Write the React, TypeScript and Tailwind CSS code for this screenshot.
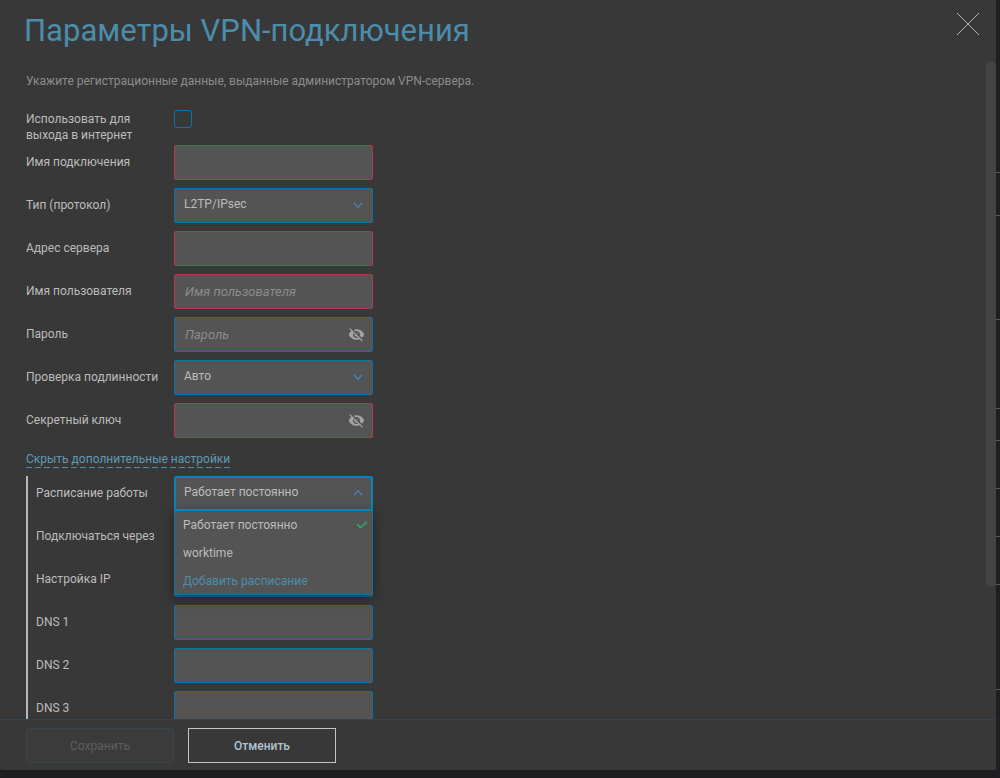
import * as React from "react";
import { clsx } from "clsx";

// ─── Data ─────────────────────────────────────────────────────────────────────

const SCHEDULES = ["Работает постоянно", "worktime"];

// ─── Icons ────────────────────────────────────────────────────────────────────

function Chevron({ up = false }: { up?: boolean }) {
  return (
    <svg
      viewBox="0 0 10 6"
      className={clsx("pointer-events-none absolute right-2.5 top-3.5 h-1.5 w-2.5", up && "rotate-180")}
      fill="none"
      stroke="#4583b8"
      strokeWidth="1.3"
      aria-hidden="true"
    >
      <path d="M0.8 0.8 5 5.2 9.2 0.8" />
    </svg>
  );
}

function EyeOff() {
  return (
    <svg viewBox="0 0 24 24" className="size-[17px]" fill="#a3a3a3" aria-hidden="true">
      <path d="M12 7c2.76 0 5 2.24 5 5 0 .65-.13 1.26-.36 1.83l2.92 2.92c1.51-1.26 2.7-2.89 3.43-4.75-1.73-4.39-6-7.5-11-7.5-1.4 0-2.74.25-3.98.7l2.16 2.16C10.74 7.13 11.35 7 12 7zM2 4.27l2.28 2.28.46.46C3.08 8.3 1.78 10.02 1 12c1.73 4.39 6 7.5 11 7.5 1.55 0 3.03-.3 4.38-.84l.42.42L19.73 22 21 20.73 3.27 3 2 4.27zM7.53 9.8l1.55 1.55c-.05.21-.08.43-.08.65 0 1.66 1.34 3 3 3 .22 0 .44-.03.65-.08l1.55 1.55c-.67.33-1.41.53-2.2.53-2.76 0-5-2.24-5-5 0-.79.2-1.53.53-2.2zm4.31-.78 3.15 3.15.02-.16c0-1.66-1.34-3-3-3l-.17.01z" />
    </svg>
  );
}

// ─── Fields ───────────────────────────────────────────────────────────────────

interface RowProps {
  id: string;
  label: string;
  nested?: boolean;
  children: React.ReactNode;
}

function Row({ id, label, nested = false, children }: RowProps) {
  return (
    <div className="flex">
      <label htmlFor={id} className={clsx("shrink-0 pt-[9px] leading-4", nested ? "w-[138px]" : "w-[148px]")}>
        {label}
      </label>
      <div className="relative w-[199px] shrink-0">{children}</div>
    </div>
  );
}

const FIELD = "block h-[35px] w-full appearance-none rounded-xs border bg-[#545454] outline-none";

interface FieldProps {
  id: string;
  label: string;
  invalid?: boolean;
  nested?: boolean;
  placeholder?: string;
}

function TextField({ id, label, invalid, nested, placeholder }: FieldProps) {
  return (
    <Row id={id} label={label} nested={nested}>
      <input
        id={id}
        type="text"
        placeholder={placeholder}
        className={clsx(FIELD, "px-2.5 text-[13px] placeholder:italic placeholder:text-[#8c8c8c]", invalid ? "border-[#b33a46]" : "border-[#0c75a5]")}
      />
    </Row>
  );
}

function SecretField({ id, label, invalid, placeholder }: FieldProps) {
  const [visible, setVisible] = React.useState(false);

  return (
    <Row id={id} label={label}>
      <input
        id={id}
        type={visible ? "text" : "password"}
        placeholder={placeholder}
        className={clsx(FIELD, "pl-2.5 pr-8 text-[13px] placeholder:italic placeholder:text-[#8c8c8c]", invalid ? "border-[#b33a46]" : "border-[#0c75a5]")}
      />
      <button
        type="button"
        aria-label="Показать"
        onClick={() => setVisible(!visible)}
        className="absolute inset-y-0 right-2 flex items-center"
      >
        <EyeOff />
      </button>
    </Row>
  );
}

function SelectField({ id, label, nested, options }: FieldProps & { options: string[] }) {
  return (
    <Row id={id} label={label} nested={nested}>
      <select id={id} className={clsx(FIELD, "border-[#0c75a5] px-[9px] pb-1")}>
        {options.map((o) => <option key={o}>{o}</option>)}
      </select>
      <Chevron />
    </Row>
  );
}

function ScheduleField() {
  const [open, setOpen] = React.useState(true);
  const [value, setValue] = React.useState(SCHEDULES[0]);

  function pick(next: string) {
    setValue(next);
    setOpen(false);
  }

  return (
    <Row id="schedule" label="Расписание работы" nested>
      <select
        id="schedule"
        value={value}
        onChange={(e) => setValue(e.target.value)}
        onMouseDown={(e) => {
          e.preventDefault();
          setOpen(!open);
        }}
        className={clsx(FIELD, "px-[9px] pb-1", open ? "border-[#0684bb] ring-1 ring-inset ring-[#0684bb]" : "border-[#0c75a5]")}
      >
        {SCHEDULES.map((s) => <option key={s}>{s}</option>)}
      </select>
      <Chevron up={open} />

      {open && (
        <div className="absolute inset-x-0 top-full z-10 -mt-0.5 border-x border-b border-t-2 border-x-[#0c75a5] border-b-[#0c75a5] border-t-[#0684bb] bg-[#545454] shadow-[0_4px_12px_rgba(0,0,0,0.4)]">
          {SCHEDULES.map((s) => (
            <button
              key={s}
              type="button"
              onClick={() => pick(s)}
              className="flex h-7 w-full items-center justify-between pl-2 pr-1 text-left"
            >
              {s}
              {s === value && (
                <svg viewBox="0 0 12 8" className="h-2 w-3" fill="none" stroke="#2fa566" strokeWidth="1.7" aria-hidden="true">
                  <path d="M1 3.2 4.4 6.6 11 0.8" />
                </svg>
              )}
            </button>
          ))}
          <button type="button" className="flex h-[27px] w-full items-center pl-2 text-left text-[#4b8dab]">
            Добавить расписание
          </button>
        </div>
      )}
    </Row>
  );
}

// Sliver of the page that stays visible behind the dialog
function Backdrop() {
  return (
    <div className="flex w-1 shrink-0 flex-col overflow-hidden *:shrink-0 *:border-b *:border-[#56575a]" aria-hidden="true">
      <div className="h-[173px]" />
      <div className="h-[43px]" />
      <div className="h-[104px]" />
      <div className="h-[89px]" />
      <div className="h-8" />
      <div className="h-12" />
      <div className="h-12" />
      <div className="h-12" />
      <div className="h-[105px]" />
    </div>
  );
}

// ─── Dialog ───────────────────────────────────────────────────────────────────

export default function App() {
  const [advanced, setAdvanced] = React.useState(true);

  return (
    <div className="flex h-screen bg-[#1f1f22] font-['Roboto','Liberation_Sans',sans-serif] text-xs text-[#bcbcbc]">
      <main className="mb-2 flex min-w-0 flex-1 flex-col rounded-b-xs bg-[#383838]">
        <header className="flex h-[61px] shrink-0 items-start justify-between pl-6 pr-4 pt-3">
          <h1 className="text-[31px] leading-[38px] text-[#4b8dab]">Параметры VPN-подключения</h1>
          <button type="button" aria-label="Закрыть" className="text-[#b0b0b0]">
            <svg viewBox="0 0 24 24" className="size-6" stroke="currentColor" strokeWidth="1" aria-hidden="true">
              <path d="M1 1 23 23M23 1 1 23" />
            </svg>
          </button>
        </header>

        <div className="flex min-h-0 flex-1">
          <form id="vpn" className="flex-1 overflow-hidden pl-[26px]" onSubmit={(e) => e.preventDefault()}>
            <p className="pb-[30px] pt-3 leading-4 text-[#8c8c8c]">
              Укажите регистрационные данные, выданные администратором VPN-сервера.
            </p>

            <div className="flex h-[26px] items-start">
              <label htmlFor="internet" className="-mt-2 w-[148px] shrink-0 pr-6 leading-4">
                Использовать для выхода в интернет
              </label>
              <input
                id="internet"
                type="checkbox"
                className="-mt-[9px] size-[18px] appearance-none rounded-[3px] border border-[#0c75a5] checked:bg-[#0c75a5]"
              />
            </div>

            <div className="flex flex-col gap-2">
              <TextField id="name" label="Имя подключения" invalid />
              <SelectField id="type" label="Тип (протокол)" options={["L2TP/IPsec"]} />
              <TextField id="server" label="Адрес сервера" invalid />
              <TextField id="user" label="Имя пользователя" placeholder="Имя пользователя" invalid />
              <SecretField id="password" label="Пароль" placeholder="Пароль" />
              <SelectField id="auth" label="Проверка подлинности" options={["Авто"]} />
              <SecretField id="key" label="Секретный ключ" invalid />
            </div>

            <button
              type="button"
              onClick={() => setAdvanced(!advanced)}
              className="mb-2 mt-[13px] block bg-[repeating-linear-gradient(90deg,#4b8dab_0_6px,transparent_6px_9px)] bg-[length:100%_1px] bg-bottom bg-no-repeat pb-px leading-4 text-[#5f9ab3]"
            >
              Скрыть дополнительные настройки
            </button>

            {advanced && (
              <div className="flex flex-col gap-2 border-l-2 border-[#b4b7c0] pl-2">
                <ScheduleField />
                <SelectField id="via" label="Подключаться через" options={[""]} nested />
                <SelectField id="ip" label="Настройка IP" options={[""]} nested />
                <TextField id="dns1" label="DNS 1" nested />
                <TextField id="dns2" label="DNS 2" nested />
                <TextField id="dns3" label="DNS 3" nested />
              </div>
            )}
          </form>
          <div className="w-2.5 shrink-0">
            <div className="h-4/5 rounded-full bg-[#444444]" />
          </div>
        </div>

        <footer className="flex shrink-0 gap-3.5 border-t border-[#38424a] px-[26px] pb-[7px] pt-2">
          <button
            type="submit"
            form="vpn"
            disabled
            className="h-[35px] w-[148px] rounded-xs border border-[#37464d] bg-[#3b3b3b] text-[#5e5e5e]"
          >
            Сохранить
          </button>
          <button type="button" className="h-[35px] w-[148px] border border-[#c4c4c4] font-medium text-[#b3c3cc]">
            Отменить
          </button>
        </footer>
      </main>
      <Backdrop />
    </div>
  );
}
